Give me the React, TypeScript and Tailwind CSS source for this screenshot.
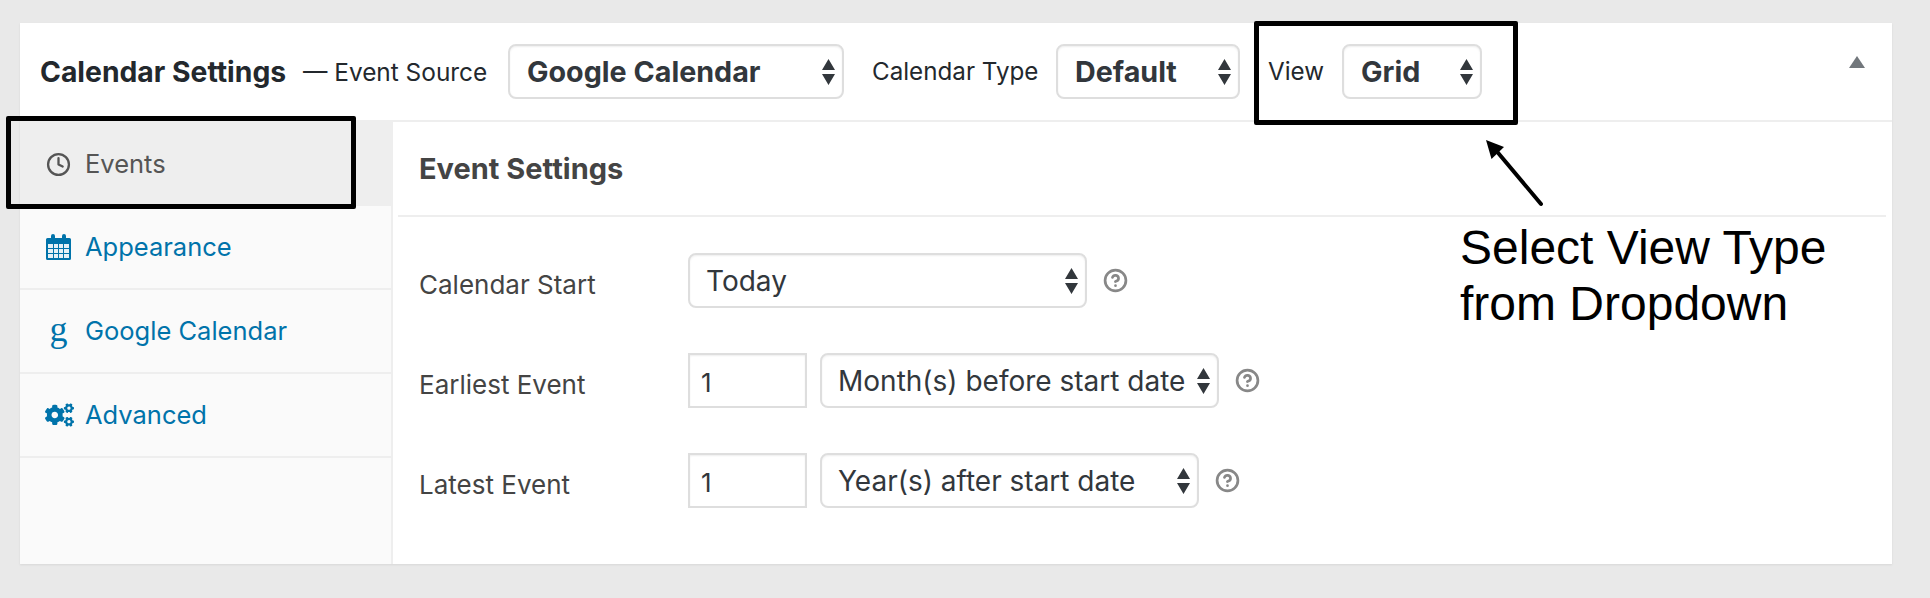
import React from 'react';
import { Clock, CircleHelp } from 'lucide-react';
import { FaCogs } from 'react-icons/fa';

const SelectBox: React.FC<{ value: string; className: string; bold?: boolean }> = ({ value, className, bold }) => (
  <div className={`relative h-[55px] shrink-0 ${className}`}>
    <select
      defaultValue={value}
      className={`h-full w-full appearance-none rounded-[8px] border-2 border-[#dedede] bg-white text-[#32373c] shadow-[inset_0_1px_2px_rgba(0,0,0,0.07)] outline-none ${
        bold ? 'pl-[17px] text-[28.7px] font-bold' : 'pl-[16px] text-[28px]'
      }`}
    >
      <option>{value}</option>
    </select>
    <svg className="pointer-events-none absolute right-[9px] top-[15px] h-[26px] w-[13px]" viewBox="0 0 13 26">
      <path d="M6.5 0 L13 11 H0 Z M0 15 H13 L6.5 26 Z" fill="#32373c" />
    </svg>
  </div>
);

const NumberBox = () => (
  <input
    type="text"
    defaultValue="1"
    className="h-[55px] w-[119px] shrink-0 border-2 border-[#dedede] bg-white pl-[11px] pt-[3px] text-[26px] text-[#32373c] shadow-[inset_0_1px_2px_rgba(0,0,0,0.07)] outline-none"
  />
);

const Help = () => <CircleHelp className="ml-[16px] h-[25px] w-[25px] shrink-0 text-[#888]" strokeWidth={2.6} />;

const CalendarIcon = () => (
  <svg className="h-[26px] w-[25px] shrink-0" viewBox="0 0 25 26" fill="#0073aa">
    <path d="M1.5 4 H5 V2 a2 2 0 0 1 4 0 V4 H16 V2 a2 2 0 0 1 4 0 V4 H23.5 a1.5 1.5 0 0 1 1.5 1.5 V24.5 a1.5 1.5 0 0 1 -1.5 1.5 H1.5 A1.5 1.5 0 0 1 0 24.5 V5.5 A1.5 1.5 0 0 1 1.5 4 Z" />
    <path
      d="M2 10 H7 V14 H2 Z M8 10 H12 V14 H8 Z M13 10 H17 V14 H13 Z M18 10 H23 V14 H18 Z M2 15 H7 V19 H2 Z M8 15 H12 V19 H8 Z M13 15 H17 V19 H13 Z M18 15 H23 V19 H18 Z M2 20 H7 V24 H2 Z M8 20 H12 V24 H8 Z M13 20 H17 V24 H13 Z M18 20 H23 V24 H18 Z"
      fill="#e6f1f6"
    />
  </svg>
);

const navItems = [
  { label: 'Appearance', icon: <CalendarIcon /> },
  {
    label: 'Google Calendar',
    icon: <span className="flex w-[25px] shrink-0 justify-center pb-[4px] font-['Liberation_Serif',serif] text-[36px] leading-none">g</span>,
  },
  { label: 'Advanced', icon: <FaCogs className="-ml-[1px] mr-[-3px] h-[26px] w-[29px] shrink-0" /> },
];

export default function App() {
  return (
    <div className="relative h-[598px] w-full overflow-hidden bg-[#e9e9e9] pl-[20px] pr-[38px] pt-[23px] font-['Inter',sans-serif]">
      {/* Settings panel */}
      <div className="flex h-[541px] flex-col bg-white shadow-[0_1px_2px_rgba(0,0,0,0.08)]">
        {/* Header */}
        <div className="flex h-[99px] shrink-0 items-center border-b-2 border-[#eeeeee] pl-[20px] pr-[27px] text-[#23282d]">
          <h2 className="w-[246px] pt-[2px] text-[28.3px] font-bold whitespace-nowrap">Calendar Settings</h2>
          <span className="ml-[17px] w-[186px] pt-[2px] text-[24.4px] whitespace-nowrap">— Event Source</span>
          <SelectBox value="Google Calendar" bold className="ml-[19px] w-[336px]" />
          <span className="ml-[28px] w-[164px] pt-[2px] text-[24.2px] whitespace-nowrap">Calendar Type</span>
          <SelectBox value="Default" bold className="ml-[20px] w-[184px]" />
          <span className="ml-[28px] w-[53px] pt-[2px] text-[24.2px]">View</span>
          <SelectBox value="Grid" bold className="ml-[21px] w-[140px]" />
          <svg className="ml-auto mb-[20px] h-[12px] w-[16px]" viewBox="0 0 16 12">
            <path d="M8 0 L16 12 H0 Z" fill="#72777c" />
          </svg>
        </div>

        <div className="flex min-h-0 flex-1">
          {/* Tabs */}
          <nav className="flex w-[373px] shrink-0 flex-col border-r-2 border-[#eeeeee] bg-[#fafafa] text-[25.5px]">
            <a className="flex h-[84px] items-center gap-[14px] bg-[#eeeeee] pl-[26px] text-[#555555]">
              <Clock className="h-[25px] w-[25px] shrink-0" strokeWidth={2.2} />
              Events
            </a>
            {navItems.map((item) => (
              <a
                key={item.label}
                className="flex h-[84px] items-center gap-[14px] border-b-2 border-[#eeeeee] pl-[26px] text-[#0073aa]"
              >
                {item.icon}
                {item.label}
              </a>
            ))}
          </nav>

          {/* Event settings */}
          <div className="min-w-0 flex-1 pl-[5px] pr-[6px] text-[#444444]">
            <h3 className="flex h-[95px] items-center border-b-2 border-[#eeeeee] pl-[21px] text-[29px] font-bold">
              Event Settings
            </h3>
            <div className="flex flex-col gap-[45px] pl-[21px] pt-[36px] text-[26px]">
              <div className="flex items-center">
                <label className="w-[269px] shrink-0 pt-[8px]">Calendar Start</label>
                <SelectBox value="Today" className="w-[399px]" />
                <Help />
              </div>
              <div className="flex items-center">
                <label className="w-[269px] shrink-0 pt-[8px]">Earliest Event</label>
                <NumberBox />
                <SelectBox value="Month(s) before start date" className="ml-[13px] w-[399px]" />
                <Help />
              </div>
              <div className="flex items-center">
                <label className="w-[269px] shrink-0 pt-[8px]">Latest Event</label>
                <NumberBox />
                <SelectBox value="Year(s) after start date" className="ml-[13px] w-[379px]" />
                <Help />
              </div>
            </div>
          </div>
        </div>
      </div>

      {/* Annotations drawn over the screenshot */}
      <div className="absolute left-[6px] top-[116px] h-[93px] w-[350px] rounded-[2px] border-[5px] border-black" />
      <div className="absolute left-[1254px] top-[21px] h-[104px] w-[264px] rounded-[2px] border-[5px] border-black" />
      <svg className="absolute left-[1470px] top-[130px] h-[80px] w-[80px]" viewBox="0 0 80 80">
        <path d="M71 74 L24 18" stroke="#000" strokeWidth="4" strokeLinecap="round" />
        <path d="M16 10 L34 17 L21.5 29 Z" fill="#000" />
      </svg>
      <div className="absolute left-[1460px] top-[220px] font-['Liberation_Sans',sans-serif] text-[48px] leading-[56px] text-black">
        Select View Type
        <br />
        from Dropdown
      </div>
    </div>
  );
}
